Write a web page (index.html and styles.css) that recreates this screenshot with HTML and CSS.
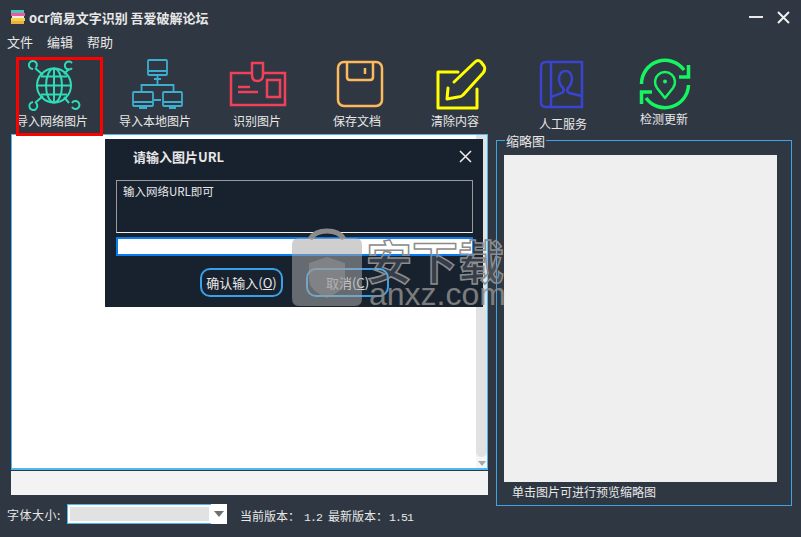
FILE: index.html
```html
<!DOCTYPE html>
<html lang="zh-CN">
<head>
    <meta charset="UTF-8">
    <title>ocr简易文字识别</title>
    <link rel="stylesheet" href="styles.css">
</head>
<body>
    <div class="window">
        <div class="titlebar">
            <svg class="app-icon" width="16" height="16" viewBox="0 0 16 16">
                <rect x="1" y="1" width="13" height="3" fill="#45c8c0"/>
                <rect x="1" y="4" width="14" height="3" fill="#f05a9a"/>
                <rect x="2" y="7" width="12" height="2" fill="#f4f0e0"/>
                <rect x="1" y="9" width="14" height="3" fill="#f4d050"/>
                <rect x="1" y="12" width="13" height="3" fill="#e8b040"/>
            </svg>
            <span class="title">ocr简易文字识别 吾爱破解论坛</span>
            <div class="win-btns">
                <svg width="14" height="14" viewBox="0 0 14 14"><path d="M0 7H14" stroke="#e8e8e8" stroke-width="2"/></svg>
                <svg width="13" height="13" viewBox="0 0 13 13"><path d="M1 1L12 12M12 1L1 12" stroke="#f0f0f0" stroke-width="2"/></svg>
            </div>
        </div>

        <div class="menu">
            <span>文件</span>
            <span>编辑</span>
            <span>帮助</span>
        </div>

        <div class="toolbar">
            <div class="tool">
                <svg width="60" height="52" viewBox="0 0 60 52" fill="none" stroke="#2fdcb8" stroke-width="2">
                    <circle cx="32" cy="27.500" r="17"/>
                    <ellipse cx="32" cy="27.500" rx="8" ry="17"/>
                    <path d="M32 10.500V44.500M15 27.500H49M19 18.500H45M19 36.500H45"/>
                    <path d="M14 9.500A4 4 0 1 0 11 11M50 5A4 4 0 1 0 50 10M11 44A4 4 0 1 0 14 45M50 45A4 4 0 1 1 50 49"/>
                    <path d="M13 10L21 17M47 11L42 16M13 45L21 38M47 45L42 39"/>
                </svg>
                <span>导入网络图片</span>
            </div>
            <div class="tool">
                <svg width="60" height="52" viewBox="0 0 60 52" fill="none" stroke="#3eaed0" stroke-width="1.800">
                    <rect x="23" y="2" width="19" height="15" rx="1"/>
                    <path d="M23 13H42M29 21H36M32.500 17V27M16.500 34V27H48.500V34"/>
                    <rect x="8" y="34" width="20" height="14" rx="1"/>
                    <path d="M8 44H28M14 50H22"/>
                    <rect x="38" y="34" width="19" height="14" rx="1"/>
                    <path d="M38 44H57M44 50H51"/>
                    <path d="M29 42H36" stroke-width="2"/>
                </svg>
                <span>导入本地图片</span>
            </div>
            <div class="tool">
                <svg width="60" height="52" viewBox="0 0 60 52" fill="none" stroke="#f0405a" stroke-width="2.500">
                    <rect x="4" y="15" width="54" height="32"/>
                    <path d="M25 5H36V17Q36 23 30.500 23Q25 23 25 17Z" fill="#2f3742"/>
                    <rect x="40" y="22" width="13" height="17" fill="#2f3742"/>
                    <path d="M11 29H23M11 34H31"/>
                </svg>
                <span>识别图片</span>
            </div>
            <div class="tool">
                <svg width="60" height="52" viewBox="0 0 60 52" fill="none" stroke="#fdb95c" stroke-width="2.500">
                    <rect x="11" y="4" width="44" height="44" rx="6"/>
                    <path d="M20 4V19Q20 22 23 22H43Q46 22 46 19V4"/>
                    <path d="M38 10V16"/>
                </svg>
                <span>保存文档</span>
            </div>
            <div class="tool">
                <svg width="60" height="52" viewBox="0 0 60 52" fill="none" stroke="#ffff00" stroke-width="3" stroke-linecap="round" stroke-linejoin="round">
                    <path d="M33 14H13V50H52V31"/>
                    <path d="M29 24L50 4Q53 1 56 4L59 8Q61 11 58 15L38 37Q36 39 33 39L22 41L23 30"/>
                </svg>
                <span>清除内容</span>
            </div>
            <div class="tool tool-low">
                <svg width="60" height="52" viewBox="0 0 60 52" fill="none" stroke="#3a44d0" stroke-width="2.500">
                    <path d="M13 4H49V49H13Q8 49 8 44V9Q8 4 13 4Z"/>
                    <path d="M18 4V49"/>
                    <path d="M18 39L29 35Q32 33 30 30Q26 26 26 20Q27 13 32.500 13Q38 13 39 20Q39 26 35 30Q33 33 36 35L49 38"/>
                </svg>
                <span>人工服务</span>
            </div>
            <div class="tool tool-high">
                <svg width="60" height="52" viewBox="0 0 60 52" fill="none" stroke="#14f560" stroke-width="3.500">
                    <path d="M7.500 26A23.500 23.500 0 0 1 50 12"/>
                    <path d="M54.500 27A23.500 23.500 0 0 1 12 40"/>
                    <path d="M54.500 7V19H45M7.500 46V34H18"/>
                    <path d="M31 40L23 30A10 10 0 1 1 39 30Z" stroke-width="2.500" stroke-linejoin="round"/>
                    <circle cx="31" cy="23.500" r="2" fill="#14f560" stroke="none"/>
                </svg>
                <span>检测更新</span>
            </div>
        </div>

        <div class="main">
            <div class="left">
                <div class="text-area">
                    <div class="scrollbar">
                        <div class="thumb"></div>
                        <div class="arrow"></div>
                    </div>
                </div>
                <div class="status-bar"></div>
                <div class="bottom-row">
                    <span class="size-label">字体大小:</span>
                    <div class="combo">
                        <div class="combo-field"><div class="combo-fill"></div></div>
                        <div class="combo-btn"><div class="arrow arrow-dark"></div></div>
                    </div>
                    <span class="version">当前版本：<span class="ver-num">1.2</span><span class="ver-next">最新版本：</span><span class="ver-num ver-num-tight">1.51</span></span>
                </div>
            </div>
            <div class="group">
                <span class="legend">缩略图</span>
                <div class="preview"></div>
                <div class="caption">单击图片可进行预览缩略图</div>
            </div>
        </div>
    </div>

    <!-- red highlight from the tutorial -->
    <div class="highlight"></div>

    <div class="dialog">
        <div class="dialog-head">
            <span>请输入图片URL</span>
            <svg width="13" height="13" viewBox="0 0 13 13"><path d="M1 1L12 12M12 1L1 12" stroke="#f0f0f0" stroke-width="1.500"/></svg>
        </div>
        <div class="hint">输入网络URL即可</div>
        <div class="url-input"></div>
        <div class="dialog-btns">
            <div class="btn">确认输入(<u>O</u>)</div>
            <div class="btn">取消(<u>C</u>)</div>
        </div>
    </div>

    <div class="watermark">
        <svg width="72" height="80" viewBox="0 0 72 80">
            <path d="M19 12Q24 4 36 4Q48 4 53 12" fill="none" stroke="#8a8a8a" stroke-width="5"/>
            <path d="M8 11H64Q71 11 71 18V71Q71 79 64 79H8Q1 79 1 71V18Q1 11 8 11Z" fill="#a8a8a8" fill-opacity="0.55"/>
            <path d="M36 30L54 36V53Q54 63 36 71Q18 63 18 53V36Z" fill="#9a9a9a" fill-opacity="0.5"/>
        </svg>
        <div class="wm-text">
            <div class="wm-cn">安下载</div>
            <div class="wm-en">anxz.com</div>
        </div>
    </div>
</body>
</html>
```

FILE: styles.css
```css
body {
    margin: 0;
    width: 801px;
    height: 537px;
    overflow: hidden;
    position: relative;
    background-color: #2f3742;
    color: #e8e8e8;
    font-family: "Noto Sans CJK SC", "Liberation Sans", sans-serif;
    font-size: 12px;
}
.titlebar {
    display: flex;
    align-items: center;
    height: 32px;
    padding: 2px 11px 0 10px;
    box-sizing: border-box;
}
.app-icon {
    margin-right: 3px;
}
.title {
    font-size: 13px;
    font-weight: bold;
}
.win-btns {
    display: flex;
    align-items: center;
    gap: 14px;
    margin-left: auto;
}
.menu {
    display: flex;
    gap: 14px;
    height: 22px;
    line-height: 20px;
    padding-left: 7px;
    font-size: 13px;
}
.toolbar {
    display: grid;
    grid-template-columns: 104px 102px 102px 98px 98px 118px 84px;
    height: 80px;
}
.tool {
    display: flex;
    flex-direction: column;
    align-items: center;
    padding-top: 4px;
}
.tool svg {
    display: block;
    overflow: visible;
}
.tool span {
    line-height: 16px;
    margin-top: 3px;
    white-space: nowrap;
}
.tool-low span {
    margin-top: 6px;
}
.tool-high span {
    margin-top: 1px;
}
.main {
    display: flex;
    padding-left: 11px;
}
.left {
    width: 477px;
}
.text-area {
    position: relative;
    height: 336px;
    box-sizing: border-box;
    background-color: #fff;
    border: 1px solid #4db8f0;
    border-bottom-width: 2px;
}
.scrollbar {
    position: absolute;
    top: 0;
    right: 0;
    bottom: 0;
    width: 11px;
    background-color: #f6f6f6;
}
.thumb {
    height: 322px;
    background-color: #e2e2e2;
    border-radius: 0 0 5px 5px;
}
.arrow {
    width: 0;
    margin: 4px auto 0;
    border-left: 4px solid transparent;
    border-right: 4px solid transparent;
    border-top: 5px solid #a8a8a8;
}
.arrow-dark {
    margin: 0;
    border-left-width: 5px;
    border-right-width: 5px;
    border-top: 6px solid #707070;
}
.status-bar {
    height: 24px;
    margin-top: 1px;
    background-color: #f3f3f3;
}
.bottom-row {
    display: flex;
    align-items: center;
    height: 20px;
    margin-top: 9px;
    margin-left: -4px;
}
.size-label {
    width: 60px;
    letter-spacing: 0.500px;
}
.combo {
    display: flex;
    width: 160px;
    height: 20px;
}
.combo-field {
    flex: 1;
    padding: 2px;
    border: 1px solid #4db8f0;
    border-right: none;
    background-color: #fff;
}
.combo-fill {
    height: 100%;
    background-color: #e2e2e2;
}
.combo-btn {
    display: flex;
    align-items: center;
    justify-content: center;
    width: 16px;
    background-color: #fff;
}
.version {
    margin: 3px 0 0 13px;
    white-space: nowrap;
}
.ver-num {
    margin-left: 4px;
    font-family: "Liberation Mono", monospace;
    font-size: 11.500px;
    letter-spacing: -0.900px;
}
.ver-num-tight {
    margin-left: 1px;
}
.ver-next {
    margin-left: 6px;
}
.group {
    position: relative;
    width: 296px;
    height: 366px;
    box-sizing: border-box;
    margin: 6px 0 0 8px;
    padding: 14px 14px 0 7px;
    border: 1px solid #3fa4e4;
}
.legend {
    position: absolute;
    top: -8px;
    left: 8px;
    padding: 0 1px;
    line-height: 16px;
    font-size: 13px;
    background-color: #2f3742;
}
.preview {
    height: 327px;
    background-color: #efefef;
}
.caption {
    padding-left: 8px;
    line-height: 20px;
}
.highlight {
    position: absolute;
    left: 16px;
    top: 57px;
    width: 81px;
    height: 73px;
    border: 3px solid #ff0000;
}
.dialog {
    position: absolute;
    left: 105px;
    top: 139px;
    width: 378px;
    height: 168px;
    box-sizing: border-box;
    padding: 0 10px 0 11px;
    background-color: #18222f;
}
.dialog-head {
    display: flex;
    align-items: center;
    justify-content: space-between;
    height: 41px;
    padding: 0 1px 6px 17px;
    box-sizing: border-box;
    font-size: 13px;
    font-weight: bold;
}
.hint {
    height: 53px;
    box-sizing: border-box;
    padding: 2px 6px;
    border: 1px solid #9a9a9a;
    border-bottom-color: #f0f0f0;
    font-size: 11.500px;
    line-height: 16px;
}
.url-input {
    height: 19px;
    box-sizing: border-box;
    margin-top: 4px;
    background-color: #fff;
    border: 2px solid #0a7cf0;
    border-right-width: 1px;
}
.dialog-btns {
    display: flex;
    gap: 23px;
    margin-top: 12px;
    padding-left: 84px;
}
.btn {
    width: 83px;
    height: 29px;
    box-sizing: border-box;
    border: 2px solid #3aa0e8;
    border-radius: 10px;
    font-size: 13px;
    line-height: 25px;
    text-align: center;
}
.watermark {
    position: absolute;
    left: 291px;
    top: 227px;
    display: flex;
    gap: 3px;
}
.wm-text {
    font-family: "Liberation Sans", sans-serif;
}
.wm-cn {
    font-family: "Noto Sans CJK SC", sans-serif;
    font-size: 46px;
    font-weight: bold;
    line-height: 48px;
    margin-top: 8px;
    color: rgba(255, 255, 255, 0.12);
    -webkit-text-stroke: 1.500px #8c8c8c;
}
.wm-en {
    margin-left: 3px;
    font-size: 32px;
    line-height: 22px;
    color: #8c8c8c;
    opacity: 0.85;
}
```
